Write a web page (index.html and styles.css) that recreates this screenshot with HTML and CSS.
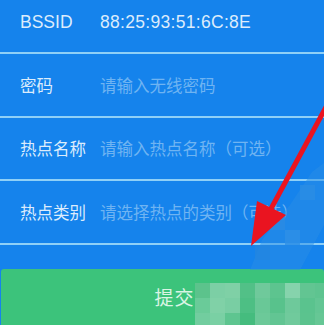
FILE: index.html
```html
<!DOCTYPE html>
<html lang="zh">
<head>
<meta charset="utf-8">
<link rel="stylesheet" href="styles.css">
</head>
<body>
<div class="page">
  <div class="form">
    <div class="row">
      <span class="label latin">BSSID</span>
      <span class="value latin">88:25:93:51:6C:8E</span>
    </div>
    <div class="row">
      <span class="label">密码</span>
      <span class="placeholder">请输入无线密码</span>
    </div>
    <div class="row">
      <span class="label">热点名称</span>
      <span class="placeholder">请输入热点名称（可选）</span>
    </div>
    <div class="row">
      <span class="label">热点类别</span>
      <span class="placeholder">请选择热点的类别（可选）</span>
    </div>
  </div>
  <button class="submit">提交</button>
  <svg class="overlay" width="324" height="325" viewBox="0 0 324 325">
    <polygon points="250,270 262,240 290,205 312,172 324,163 324,225 300,270" fill="#2a8de6" opacity="0.5"/>
    <rect x="270" y="215" width="15" height="15" fill="#2a8be2" opacity="0.8"/>
    <rect x="255" y="245" width="15" height="15" fill="#2386e0" opacity="0.8"/>
    <rect x="285" y="230" width="15" height="15" fill="#2e90e6" opacity="0.8"/>
    <rect x="300" y="185" width="15" height="15" fill="#2a8de4" opacity="0.8"/>
    <g>
      <rect x="195" y="283" width="15" height="15" fill="#5cc38c"/>
      <rect x="210" y="283" width="15" height="15" fill="#7ccfa5"/>
      <rect x="225" y="283" width="15" height="15" fill="#7fd0a6"/>
      <rect x="240" y="283" width="15" height="15" fill="#52c087"/>
      <rect x="255" y="283" width="15" height="15" fill="#6fc99b"/>
      <rect x="270" y="283" width="15" height="15" fill="#5dc48f"/>
      <rect x="285" y="283" width="15" height="15" fill="#86d3ac"/>
      <rect x="300" y="283" width="15" height="15" fill="#62c592"/>
      <rect x="315" y="283" width="15" height="15" fill="#5ec490"/>
      <rect x="195" y="298" width="15" height="15" fill="#6acb99"/>
      <rect x="210" y="298" width="15" height="15" fill="#80d1a7"/>
      <rect x="225" y="298" width="15" height="15" fill="#79cea3"/>
      <rect x="240" y="298" width="15" height="15" fill="#4dbf84"/>
      <rect x="255" y="298" width="15" height="15" fill="#69c897"/>
      <rect x="270" y="298" width="15" height="15" fill="#58c28c"/>
      <rect x="285" y="298" width="15" height="15" fill="#6ec99b"/>
      <rect x="300" y="298" width="15" height="15" fill="#5ac38e"/>
      <rect x="315" y="298" width="15" height="15" fill="#63c694"/>
      <rect x="195" y="313" width="15" height="12" fill="#72cd9f"/>
      <rect x="210" y="313" width="15" height="12" fill="#7ad0a4"/>
      <rect x="225" y="313" width="15" height="12" fill="#5ec590"/>
      <rect x="240" y="313" width="15" height="12" fill="#45bc7e"/>
      <rect x="255" y="313" width="15" height="12" fill="#6cc999"/>
      <rect x="270" y="313" width="15" height="12" fill="#62c593"/>
      <rect x="285" y="313" width="15" height="12" fill="#70ca9c"/>
      <rect x="300" y="313" width="15" height="12" fill="#5bc38e"/>
      <rect x="315" y="313" width="15" height="12" fill="#66c795"/>
    </g>
    <line x1="332" y1="96" x2="266" y2="218" stroke="#ea1420" stroke-width="5" stroke-linecap="round"/>
    <polygon points="251,246 257,201 286,215" fill="#ea1420"/>
  </svg>
</div>
</body>
</html>
```
FILE: styles.css
```css
html, body {
  margin: 0;
  padding: 0;
}
body {
  background: #1583ec;
  font-family: "Noto Sans CJK SC", "Liberation Sans", sans-serif;
}
.page {
  position: relative;
  width: 324px;
  height: 325px;
  overflow: hidden;
  background: #1583ec;
}
.form {
  margin-top: -9.5px;
  display: flex;
  flex-direction: column;
}
.row {
  height: 61.5px;
  border-bottom: 2px solid #8fd0f7;
  display: flex;
  align-items: center;
  padding-left: 20px;
  font-size: 16.5px;
}
.label {
  width: 80px;
  flex: none;
  color: #dcecfc;
}
.placeholder {
  color: #6fb4f2;
  white-space: nowrap;
}
.value {
  color: #dcecfc;
  white-space: nowrap;
  letter-spacing: 0.3px;
}
.latin {
  font-family: "Liberation Sans", sans-serif;
  font-size: 17.5px;
  padding-top: 2px;
}
.submit {
  display: block;
  margin: 24.5px 0 0 1px;
  width: 323px;
  height: 58px;
  border: none;
  border-radius: 3px;
  background: #3cc37b;
  color: #d9f4e4;
  font-family: "Noto Sans CJK SC", sans-serif;
  font-size: 19px;
  padding: 0 0 4px 24px;
  letter-spacing: 1px;
}
.overlay {
  position: absolute;
  left: 0;
  top: 0;
}
```
